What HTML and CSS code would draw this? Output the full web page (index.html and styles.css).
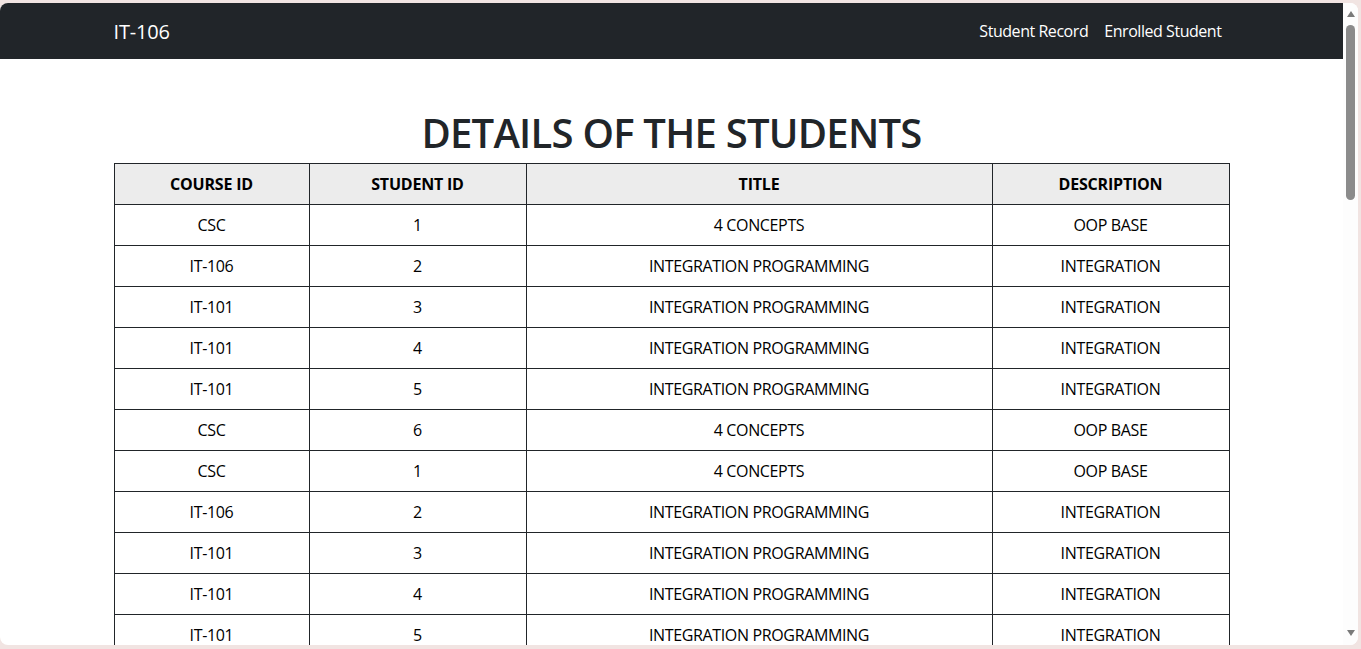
FILE: index.html
```html
<!DOCTYPE html>
<html lang="en">
<head>
<meta charset="utf-8">
<title>IT-106</title>
<link rel="stylesheet" href="styles.css">
</head>
<body>
<div class="window">
  <div class="viewport">
    <nav class="navbar">
      <div class="container nav-inner">
        <a class="brand" href="#">IT-106</a>
        <div class="nav-links">
          <a class="nav-link" href="#">Student Record</a>
          <a class="nav-link" href="#">Enrolled Student</a>
        </div>
      </div>
    </nav>
    <main class="container main">
      <h1 class="title">DETAILS OF THE STUDENTS</h1>
      <table class="records">
        <colgroup>
          <col class="c1"><col class="c2"><col class="c3"><col class="c4">
        </colgroup>
        <thead>
          <tr><th>COURSE ID</th><th>STUDENT ID</th><th>TITLE</th><th>DESCRIPTION</th></tr>
        </thead>
        <tbody>
          <tr><td>CSC</td><td>1</td><td>4 CONCEPTS</td><td>OOP BASE</td></tr>
          <tr><td>IT-106</td><td>2</td><td>INTEGRATION PROGRAMMING</td><td>INTEGRATION</td></tr>
          <tr><td>IT-101</td><td>3</td><td>INTEGRATION PROGRAMMING</td><td>INTEGRATION</td></tr>
          <tr><td>IT-101</td><td>4</td><td>INTEGRATION PROGRAMMING</td><td>INTEGRATION</td></tr>
          <tr><td>IT-101</td><td>5</td><td>INTEGRATION PROGRAMMING</td><td>INTEGRATION</td></tr>
          <tr><td>CSC</td><td>6</td><td>4 CONCEPTS</td><td>OOP BASE</td></tr>
          <tr><td>CSC</td><td>1</td><td>4 CONCEPTS</td><td>OOP BASE</td></tr>
          <tr><td>IT-106</td><td>2</td><td>INTEGRATION PROGRAMMING</td><td>INTEGRATION</td></tr>
          <tr><td>IT-101</td><td>3</td><td>INTEGRATION PROGRAMMING</td><td>INTEGRATION</td></tr>
          <tr><td>IT-101</td><td>4</td><td>INTEGRATION PROGRAMMING</td><td>INTEGRATION</td></tr>
          <tr><td>IT-101</td><td>5</td><td>INTEGRATION PROGRAMMING</td><td>INTEGRATION</td></tr>
          <tr><td>CSC</td><td>6</td><td>4 CONCEPTS</td><td>OOP BASE</td></tr>
        </tbody>
      </table>
    </main>
  </div>
  <div class="scrollbar">
    <span class="arrow up"></span>
    <span class="thumb"></span>
    <span class="track"></span>
    <span class="arrow down"></span>
  </div>
</div>
</body>
</html>
```

FILE: styles.css
```css
* { box-sizing: border-box; }
html, body { margin: 0; height: 649px; overflow: hidden; }
body {
  background: #f1e4e2;
  font-family: "Open Sans", "Noto Sans", sans-serif;
  font-size: 16px;
  line-height: 1.5;
  color: #212529;
}
.window {
  margin-top: 3px;
  margin-right: 3px;
  height: 642px;
  background: #fff;
  border-radius: 8px;
  overflow: hidden;
  display: flex;
}
.viewport { flex: 1; overflow: hidden; min-width: 0; }
.container { width: 1140px; margin: 0 auto; padding: 0 12px; }
.navbar { background: #212529; padding: 8px 0; }
.nav-inner { display: flex; justify-content: space-between; align-items: center; }
.brand {
  color: #fff; text-decoration: none; font-size: 20px; line-height: 30px;
  padding: 6px 0 4px; letter-spacing: -0.2px;
}
.nav-links { display: flex; }
.nav-link {
  color: #fff; text-decoration: none; padding: 8px; font-size: 16px; line-height: 24px;
  letter-spacing: -0.45px;
}
.main { padding-top: 48px; }
.title {
  margin: 0 0 6px; padding-top: 2px; text-align: center; font-size: 40px; font-weight: 600;
  line-height: 48px; color: #212529; letter-spacing: -0.75px;
}
.records {
  width: 100%; border-collapse: collapse; table-layout: fixed; color: #000;
}
.c1 { width: 195px; }
.c2 { width: 217px; }
.c3 { width: 466px; }
.c4 { width: 237px; }
.records th, .records td {
  border: 1px solid #212529; padding: 8px; text-align: center;
  font-size: 16px; line-height: 24px; letter-spacing: -0.35px;
}
.records th { background: #ececec; font-weight: 700; letter-spacing: -0.2px; }
.scrollbar {
  width: 15px; background: #fdfdfd; display: flex; flex-direction: column;
  align-items: center;
}
.arrow { width: 0; height: 0; border-left: 4.5px solid transparent; border-right: 4.5px solid transparent; }
.arrow.up { border-bottom: 6px solid #7a7a7a; margin-top: 8px; }
.arrow.down { border-top: 6px solid #7a7a7a; margin-bottom: 9px; }
.thumb { width: 9px; height: 175px; background: #8b8b8b; border-radius: 5px; margin-top: 8px; }
.track { flex: 1; }
```
